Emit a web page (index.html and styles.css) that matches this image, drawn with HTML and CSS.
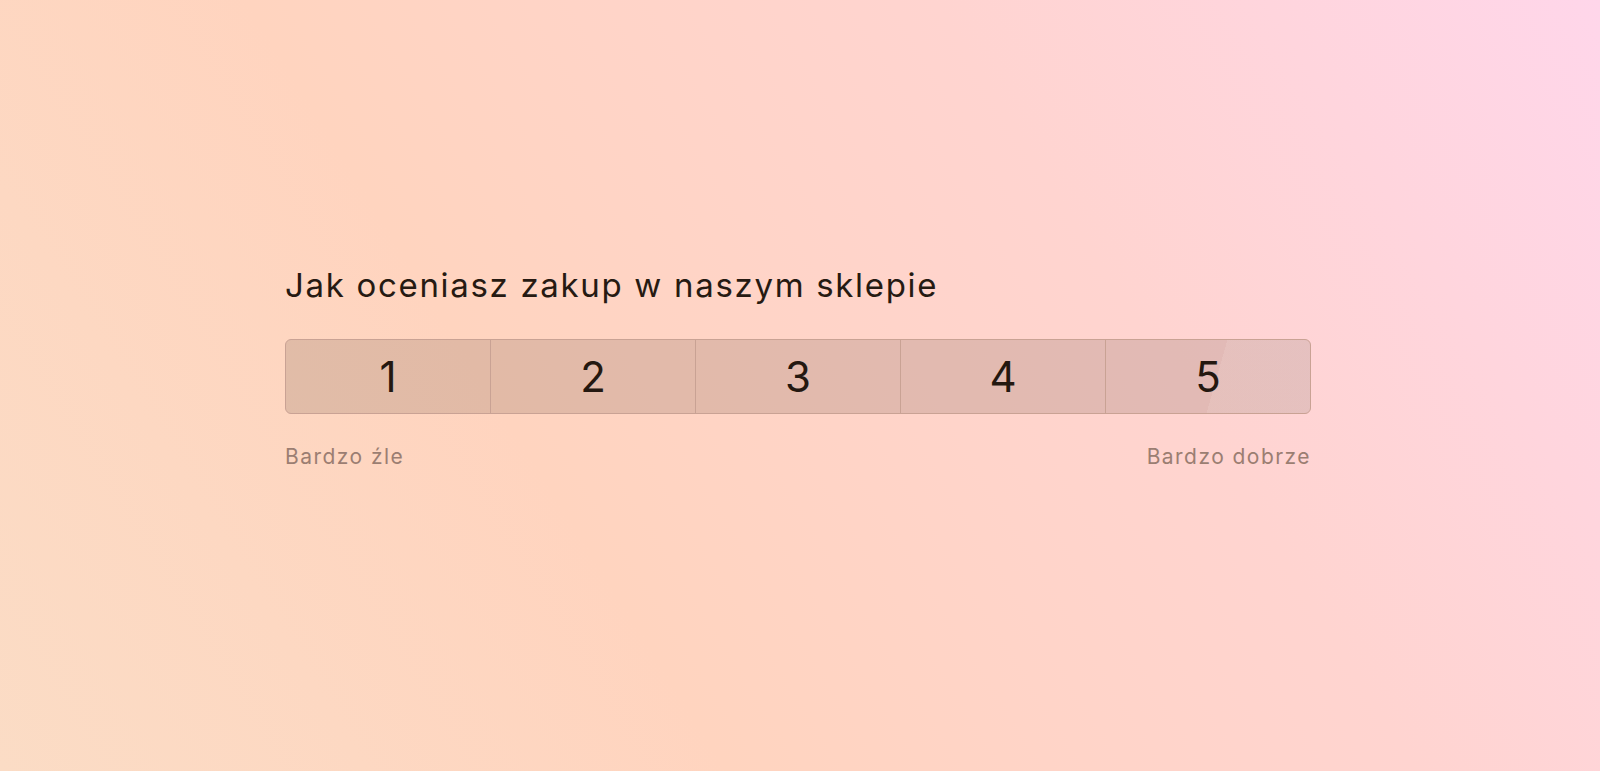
FILE: index.html
```html
<!DOCTYPE html>
<html lang="pl">
<head>
<meta charset="utf-8">
<title>Ocena zakupu</title>
<link rel="stylesheet" href="styles.css">
</head>
<body>
<main class="page">
  <section class="survey">
    <h1 class="survey__question">Jak oceniasz zakup w naszym sklepie</h1>
    <div class="scale" role="radiogroup" aria-label="Ocena">
      <button class="scale__item" type="button">1</button>
      <button class="scale__item" type="button">2</button>
      <button class="scale__item" type="button">3</button>
      <button class="scale__item" type="button">4</button>
      <button class="scale__item scale__item--last" type="button">5</button>
    </div>
    <div class="scale__legend">
      <span>Bardzo źle</span>
      <span>Bardzo dobrze</span>
    </div>
  </section>
</main>
</body>
</html>
```
FILE: styles.css
```css
* { box-sizing: border-box; }

html, body {
  margin: 0;
  height: 100%;
}

body {
  font-family: "Inter", "Open Sans", sans-serif;
  color: #261a12;
  background: linear-gradient(58deg, #fbdcc5 0%, #ffd4bf 35%, #ffd4d0 68%, #ffd6ea 100%);
  overflow: hidden;
}

.page {
  height: 100%;
  padding-top: 263px;
  padding-left: 285px;
}

.survey {
  width: 1026px;
}

.survey__question {
  margin: 0;
  font-size: 33px;
  font-weight: 400;
  line-height: 44px;
  letter-spacing: 1.68px;
}

.scale {
  display: flex;
  margin-top: 32px;
  height: 75px;
  border: 1px solid #c9a294;
  border-radius: 6px;
  overflow: hidden;
  background: rgba(62, 38, 25, 0.15);
}

.scale__item {
  flex: 1 1 0;
  border: 0;
  border-left: 1px solid #c9a294;
  background: transparent;
  font-family: inherit;
  font-size: 42px;
  font-weight: 400;
  color: #241810;
  padding: 0;
  cursor: pointer;
}

.scale__item:first-child { border-left: 0; }

/* lighter hover wash on the last option */
.scale__item--last {
  background: linear-gradient(106deg, transparent 54%, rgba(255, 240, 236, 0.12) 54%);
}

.scale__legend {
  display: flex;
  justify-content: space-between;
  margin-top: 30px;
  font-size: 21px;
  letter-spacing: 1.45px;
  color: #9b7e72;
}
```
